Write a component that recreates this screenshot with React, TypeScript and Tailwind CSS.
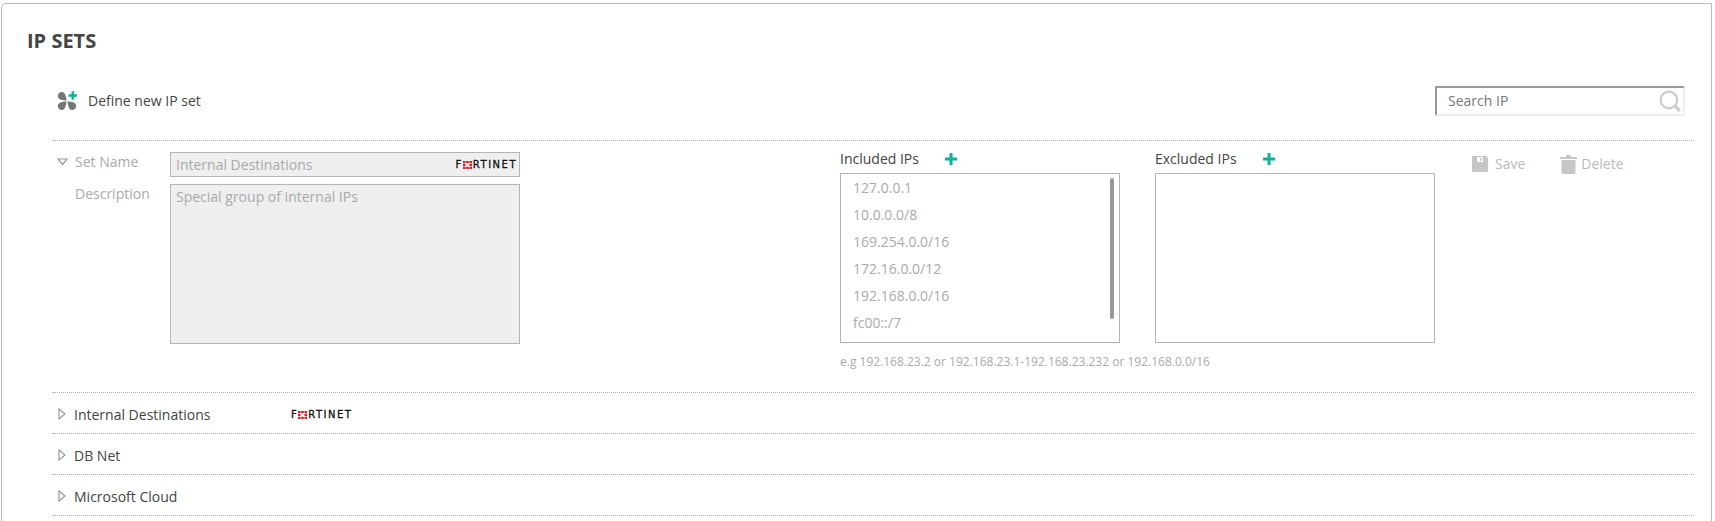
import React from "react";

const ips = ["127.0.0.1", "10.0.0.0/8", "169.254.0.0/16", "172.16.0.0/12", "192.168.0.0/16", "fc00::/7"];
const rows = ["Internal Destinations", "DB Net", "Microsoft Cloud"];

const Plus = ({ className }: { className: string }) => (
  <svg viewBox="0 0 12 12" className={className}>
    <path d="M4.500 0h3v4.500H12v3H7.500V12h-3V7.500H0v-3h4.500z" fill="#0fb294" />
  </svg>
);

const FortinetLogo = () => (
  <span className="flex items-center font-['DejaVu_Sans',sans-serif] text-[10px] leading-none font-normal tracking-[1.5px] text-[#111] [-webkit-text-stroke:0.3px_#111]">
    <span>F</span>
    <svg viewBox="0 0 9 8" className="mr-[1px] h-2 w-[9px]">
      <g fill="#d81f26">
        <rect x="0" y="0" width="2.500" height="2.200" />
        <rect x="3.200" y="0" width="2.600" height="2.200" />
        <rect x="6.500" y="0" width="2.500" height="2.200" />
        <rect x="0" y="2.900" width="2.500" height="2.200" />
        <rect x="6.500" y="2.900" width="2.500" height="2.200" />
        <rect x="0" y="5.800" width="2.500" height="2.200" />
        <rect x="3.200" y="5.800" width="2.600" height="2.200" />
        <rect x="6.500" y="5.800" width="2.500" height="2.200" />
      </g>
    </svg>
    <span className="-mr-[1px]">RTINET</span>
  </span>
);

const ClosedArrow = () => (
  <svg viewBox="0 0 8 12" className="mt-[-3px] mr-[8px] ml-[6px] h-3 w-2 shrink-0">
    <path d="M1 1l6 5-6 5z" fill="none" stroke="#999" strokeWidth="1.200" />
  </svg>
);

export default function App() {
  return (
    <div className="h-[521px] w-[1715px] overflow-hidden bg-white pt-[3px] pl-[1px] font-['Open_Sans',sans-serif] text-sm text-[#444]">
      <div className="h-[560px] w-[1711px] rounded-tl-[4px] border border-[#bbb] bg-white pt-[25px] pr-[17px] pl-[50px]">
        <h1 className="-ml-[25px] text-xl leading-[24px] font-bold text-[#444]">IP SETS</h1>

        {/* Toolbar */}
        <div className="mt-[33px] flex h-[55px] items-start justify-between border-b border-dotted border-[#aaa]">
          <div className="flex items-center pt-[5px] pl-[5px]">
            <svg viewBox="0 0 20 20" className="mr-[11px] h-5 w-5">
              <g fill="#777">
                <path d="M9.500 9.500C9.500 9.500 9.200 1 4.800 1 2.500 1 .8 2.800.8 5c0 3.800 5 4.500 8.700 4.500z" />
                <path d="M9.500 10.500C9.500 10.500 9.200 19 4.800 19 2.500 19 .8 17.200.8 15c0-3.800 5-4.500 8.700-4.500z" />
                <path d="M10.500 10.500c0 0 .3 8.500 4.700 8.500 2.300 0 4-1.800 4-4 0-3.800-5-4.500-8.700-4.500z" />
              </g>
              <path d="M14.300 0h3v3h3v3h-3v3h-3V6h-3V3h3z" fill="#0fb294" stroke="#fff" strokeWidth=".5" />
            </svg>
            <span className="leading-5">Define new IP set</span>
          </div>
          <div className="mr-[9px] flex h-[30px] w-[250px] items-center justify-between border-2 border-t-[#999] border-r-[#eee] border-b-[#eee] border-l-[#999] pr-[2px] pl-[11px]">
            <span className="text-[#777]">Search IP</span>
            <svg viewBox="0 0 20 20" className="h-[22px] w-[22px]">
              <circle cx="9" cy="9" r="7.500" fill="none" stroke="#ccc" strokeWidth="2" />
              <path d="M14.500 14.500L19 19" stroke="#ccc" strokeWidth="3" />
            </svg>
          </div>
        </div>

        {/* Expanded set */}
        <div className="flex h-[252px] border-b border-dotted border-[#aaa]">
          <div className="w-[118px] shrink-0 pt-[11px] text-[#aaa]">
            <div className="flex h-5 items-center">
              <svg viewBox="0 0 12 8" className="mr-[6px] ml-[5px] h-2 w-3">
                <path d="M1 1h9L5.500 6.500z" fill="none" stroke="#999" strokeWidth="1.200" />
              </svg>
              <span>Set Name</span>
            </div>
            <div className="mt-[12px] pl-[23px] leading-5">Description</div>
          </div>

          <div className="w-[350px] shrink-0 pt-[11px]">
            <div className="flex h-[25px] items-center justify-between border border-[#b5b5b5] bg-[#efefef] pr-[3px] pl-[5px] text-[#aaa]">
              <span>Internal Destinations</span>
              <FortinetLogo />
            </div>
            <div className="mt-[7px] h-[160px] border border-[#b5b5b5] bg-[#efefef] pt-[2px] pl-[5px] text-[#aaa]">
              Special group of internal IPs
            </div>
          </div>

          <div className="ml-[320px] w-[280px] shrink-0 pt-[8px]">
            <div className="flex h-5 items-center">
              <span>Included IPs</span>
              <Plus className="ml-[26px] h-3 w-3" />
            </div>
            <div className="relative mt-[4px] h-[170px] border border-[#b5b5b5] pl-3 text-[#aaa]">
              {ips.map((ip) => (
                <div key={ip} className="h-[27px] leading-[27px]">
                  {ip}
                </div>
              ))}
              <div className="absolute top-1 right-[5px] h-[141px] w-1 rounded-full bg-[#999]" />
            </div>
            <p className="mt-[10px] whitespace-nowrap text-xs leading-[18px] text-[#aaa]">
              e.g 192.168.23.2 or 192.168.23.1-192.168.23.232 or 192.168.0.0/16
            </p>
          </div>

          <div className="ml-[35px] w-[280px] shrink-0 pt-[8px]">
            <div className="flex h-5 items-center">
              <span>Excluded IPs</span>
              <Plus className="ml-[26px] h-3 w-3" />
            </div>
            <div className="mt-[4px] h-[170px] border border-[#b5b5b5]" />
          </div>

          <div className="ml-[37px] flex items-start pt-[13px] text-[#bbb]">
            <div className="flex h-5 items-center">
              <svg viewBox="0 0 16 16" className="mr-[7px] h-4 w-4">
                <path
                  fillRule="evenodd"
                  d="M1.500 0H14l2 2v12.500a1.500 1.500 0 0 1-1.500 1.500h-13A1.500 1.500 0 0 1 0 14.500v-13A1.500 1.500 0 0 1 1.500 0zM5 1v5h6V1zM8 2h1.500v3H8z"
                  fill="#c6c6c6"
                />
              </svg>
              <span>Save</span>
            </div>
            <div className="ml-[35px] flex h-5 items-center">
              <svg viewBox="0 0 17 19" className="mr-[4px] h-[19px] w-[17px]">
                <path d="M6 0h5v2h6v2H0V2h6zM1.500 5h14v12.500a1.500 1.500 0 0 1-1.500 1.500H3a1.500 1.500 0 0 1-1.500-1.500z" fill="#c6c6c6" />
              </svg>
              <span>Delete</span>
            </div>
          </div>
        </div>

        {/* Collapsed sets */}
        {rows.map((name, i) => (
          <div key={name} className="flex h-[41px] items-center border-b border-dotted border-[#aaa] pt-1">
            <ClosedArrow />
            <span className="w-[217px] shrink-0">{name}</span>
            {i === 0 && <FortinetLogo />}
          </div>
        ))}
      </div>
    </div>
  );
}
